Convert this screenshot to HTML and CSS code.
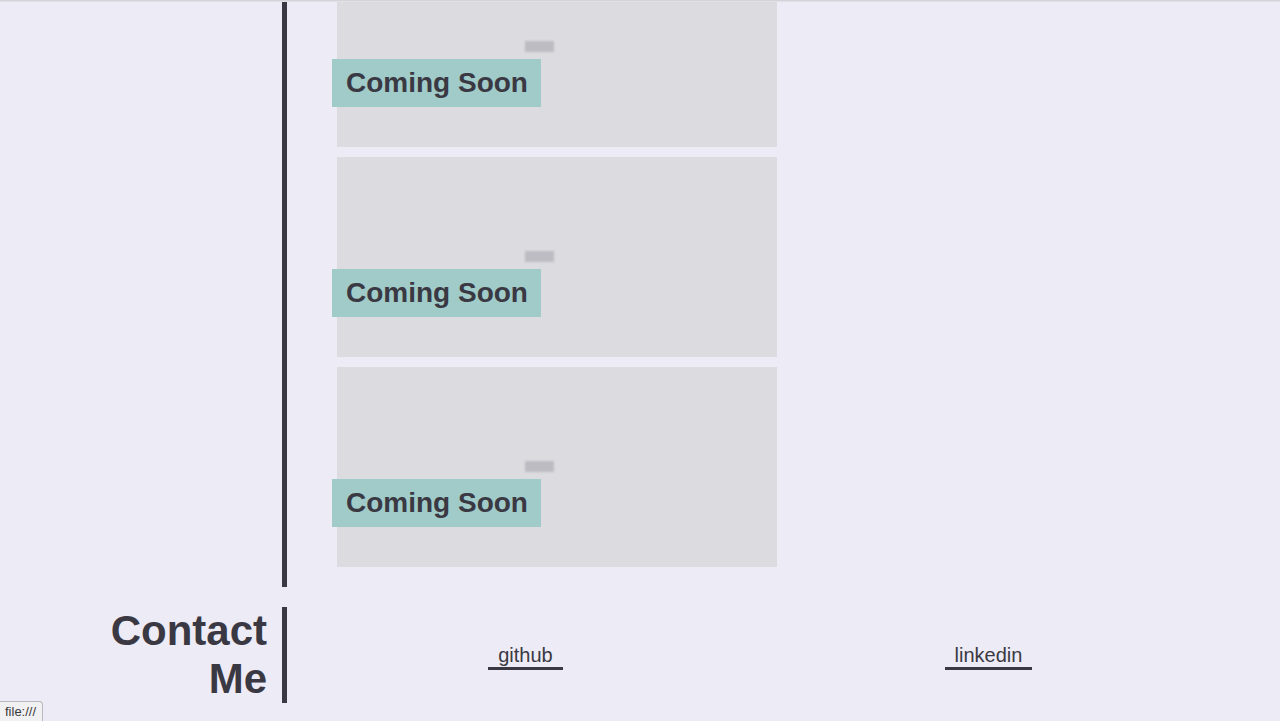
FILE: index.html
```html
<!DOCTYPE html>
<html>
<head>
<meta charset="utf-8">
<link rel="stylesheet" href="styles.css">
</head>
<body>
<div class="topline"></div>
<div class="viewport">
  <section class="row projects">
    <div class="label-col"></div>
    <div class="content projects-list">
      <div class="card">
        <div class="thumb"></div>
        <h2 class="soon">Coming Soon</h2>
      </div>
      <div class="card">
        <div class="thumb"></div>
        <h2 class="soon">Coming Soon</h2>
      </div>
      <div class="card">
        <div class="thumb"></div>
        <h2 class="soon">Coming Soon</h2>
      </div>
    </div>
  </section>
  <section class="row contact">
    <div class="label-col"><h1 class="heading">Contact<br>Me</h1></div>
    <div class="content links">
      <a class="link" href="#">github</a>
      <a class="link" href="#">linkedin</a>
    </div>
  </section>
</div>
<div class="status">file:///</div>
</body>
</html>
```
FILE: styles.css
```css
html, body {
  margin: 0;
  padding: 0;
  height: 100%;
  overflow: hidden;
}
body {
  background: #edebf5;
  font-family: "Liberation Sans", Arial, sans-serif;
  color: #3a3943;
}
.topline {
  position: fixed;
  top: 0;
  left: 0;
  right: 0;
  height: 2px;
  background: #e2e1e8;
  border-top: 1px solid #d4d3da;
  box-sizing: border-box;
  z-index: 5;
}
.viewport {
  display: flex;
  flex-direction: column;
  gap: 20px;
}
.row {
  display: flex;
}
.label-col {
  width: 282px;
  box-sizing: border-box;
  padding-right: 15px;
  display: flex;
  justify-content: flex-end;
  align-items: center;
}
.content {
  border-left: 5px solid #3a3943;
  flex: 1;
}
.projects {
  margin-top: -53px;
}
.projects-list {
  padding: 0 0 20px 50px;
  display: flex;
  flex-direction: column;
  gap: 10px;
}
.card {
  width: 440px;
  height: 200px;
  background: #dcdbe0;
  display: flex;
  flex-direction: column;
  align-items: flex-start;
}
.thumb {
  width: 29px;
  height: 11px;
  background: #bdbcc2;
  filter: blur(0.8px);
  margin: 94px 0 0 188px;
}
.soon {
  margin: 7px 0 0 -5px;
  padding: 8px 13px 8px 14px;
  background: #a0cbc9;
  font-size: 28px;
  font-weight: bold;
  line-height: 32px;
  color: #3a3943;
}
.heading {
  margin: 0;
  font-size: 42px;
  line-height: 48px;
  font-weight: bold;
  text-align: right;
  color: #3a3943;
}
.links {
  display: grid;
  grid-template-columns: 463px 463px;
  padding-left: 7px;
  align-items: center;
  justify-items: center;
}
.link {
  font-size: 20px;
  line-height: 23px;
  color: #3a3943;
  text-decoration: none;
  padding: 0 10px;
  border-bottom: 3px solid #3a3943;
  margin-top: 4px;
}
.status {
  position: fixed;
  left: 0;
  bottom: 0;
  height: 20px;
  padding: 0 6px 0 5px;
  background: #f1f1f3;
  border: 1px solid #b9b9be;
  border-left: none;
  border-bottom: none;
  border-top-right-radius: 4px;
  font-size: 13px;
  line-height: 20px;
  color: #3a3a3a;
  box-sizing: border-box;
}
```
